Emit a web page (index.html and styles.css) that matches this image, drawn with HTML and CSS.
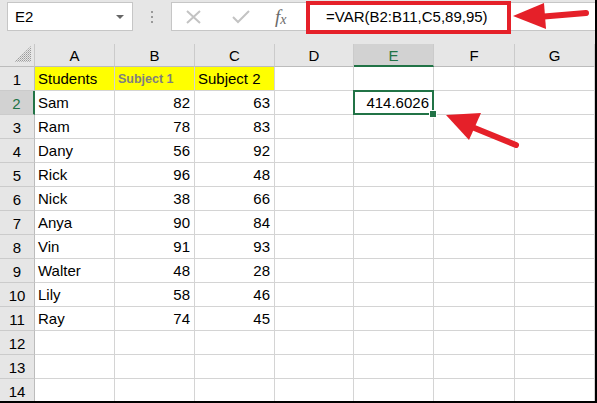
FILE: index.html
```html
<!DOCTYPE html>
<html lang="en">
<head>
    <meta charset="UTF-8">
    <title>VAR - Excel</title>
    <link rel="stylesheet" href="styles.css">
</head>
<body>
    <div class="window">
        <div class="toolbar">
            <div class="namebox">
                <span>E2</span>
                <span class="drop"></span>
            </div>
            <div class="grip"><i></i><i></i><i></i></div>
            <div class="formulabar">
                <div class="fbtns">
                    <svg class="ico" width="18" height="16" viewBox="0 0 18 16"><path d="M2 2 L15 14 M15 2 L2 14" stroke="#c3c3c3" stroke-width="2" fill="none"/></svg>
                    <svg class="ico" width="20" height="16" viewBox="0 0 20 16"><path d="M2 8 L7 13 L18 2" stroke="#c3c3c3" stroke-width="2" fill="none"/></svg>
                    <span class="fx">f<sub>x</sub></span>
                </div>
                <div class="formula">=VAR(B2:B11,C5,89,95)</div>
            </div>
        </div>

        <div class="sheet">
            <div class="hd corner">
                <svg width="18" height="17" viewBox="0 0 18 17">
                    <defs>
                        <pattern id="dots" width="2" height="2" patternUnits="userSpaceOnUse">
                            <rect width="1" height="1" fill="#9a9a9a"/>
                            <rect x="1" y="1" width="1" height="1" fill="#b8b8b8"/>
                        </pattern>
                    </defs>
                    <polygon points="17,0 17,16 0,16" fill="url(#dots)"/>
                </svg>
            </div>
            <div class="hd col">A</div>
            <div class="hd col">B</div>
            <div class="hd col">C</div>
            <div class="hd col">D</div>
            <div class="hd col sel">E</div>
            <div class="hd col">F</div>
            <div class="hd col">G</div>

            <div class="hd row">1</div>
            <div class="c yel">Students</div>
            <div class="c yel sub">Subject 1</div>
            <div class="c yel">Subject 2</div>
            <div class="c"></div><div class="c"></div><div class="c"></div><div class="c"></div>

            <div class="hd row sel">2</div>
            <div class="c">Sam</div><div class="c n">82</div><div class="c n">63</div>
            <div class="c"></div><div class="c n active">414.6026</div><div class="c"></div><div class="c"></div>

            <div class="hd row">3</div>
            <div class="c">Ram</div><div class="c n">78</div><div class="c n">83</div>
            <div class="c"></div><div class="c"></div><div class="c"></div><div class="c"></div>

            <div class="hd row">4</div>
            <div class="c">Dany</div><div class="c n">56</div><div class="c n">92</div>
            <div class="c"></div><div class="c"></div><div class="c"></div><div class="c"></div>

            <div class="hd row">5</div>
            <div class="c">Rick</div><div class="c n">96</div><div class="c n">48</div>
            <div class="c"></div><div class="c"></div><div class="c"></div><div class="c"></div>

            <div class="hd row">6</div>
            <div class="c">Nick</div><div class="c n">38</div><div class="c n">66</div>
            <div class="c"></div><div class="c"></div><div class="c"></div><div class="c"></div>

            <div class="hd row">7</div>
            <div class="c">Anya</div><div class="c n">90</div><div class="c n">84</div>
            <div class="c"></div><div class="c"></div><div class="c"></div><div class="c"></div>

            <div class="hd row">8</div>
            <div class="c">Vin</div><div class="c n">91</div><div class="c n">93</div>
            <div class="c"></div><div class="c"></div><div class="c"></div><div class="c"></div>

            <div class="hd row">9</div>
            <div class="c">Walter</div><div class="c n">48</div><div class="c n">28</div>
            <div class="c"></div><div class="c"></div><div class="c"></div><div class="c"></div>

            <div class="hd row">10</div>
            <div class="c">Lily</div><div class="c n">58</div><div class="c n">46</div>
            <div class="c"></div><div class="c"></div><div class="c"></div><div class="c"></div>

            <div class="hd row">11</div>
            <div class="c">Ray</div><div class="c n">74</div><div class="c n">45</div>
            <div class="c"></div><div class="c"></div><div class="c"></div><div class="c"></div>

            <div class="hd row">12</div>
            <div class="c"></div><div class="c"></div><div class="c"></div>
            <div class="c"></div><div class="c"></div><div class="c"></div><div class="c"></div>

            <div class="hd row">13</div>
            <div class="c"></div><div class="c"></div><div class="c"></div>
            <div class="c"></div><div class="c"></div><div class="c"></div><div class="c"></div>

            <div class="hd row">14</div>
            <div class="c"></div><div class="c"></div><div class="c"></div>
            <div class="c"></div><div class="c"></div><div class="c"></div><div class="c"></div>
        </div>

        <!-- anotações em vermelho -->
        <div class="redbox"></div>
        <svg class="arrows" width="597" height="403" viewBox="0 0 597 403">
            <line x1="538" y1="17" x2="586" y2="13" stroke="#e52029" stroke-width="6" stroke-linecap="round"/>
            <polygon points="513,16 544,3 546,29" fill="#e52029"/>
            <line x1="472" y1="127" x2="516" y2="145" stroke="#e52029" stroke-width="6" stroke-linecap="round"/>
            <polygon points="446,115 481,113 469,140" fill="#e52029"/>
        </svg>
    </div>
</body>
</html>
```

FILE: styles.css
```css
* {
    margin: 0;
    padding: 0;
    box-sizing: border-box;
}
body {
    background: #fff;
    font-family: "Liberation Sans", Arial, sans-serif;
    font-size: 15px;
    color: #000;
}
.window {
    position: relative;
    width: 597px;
    height: 403px;
    overflow: hidden;
    background: #e6e6e6;
    border-right: 2px solid #000;
    border-bottom: 2px solid #000;
}
.toolbar {
    height: 44px;
    display: flex;
    align-items: flex-start;
    padding-top: 2px;
}
.namebox {
    margin-left: 7px;
    width: 126px;
    height: 29px;
    background: #fff;
    border: 1px solid #c6c6c6;
    display: flex;
    align-items: center;
    justify-content: space-between;
    padding: 0 8px 0 7px;
    font-size: 15px;
}
.drop {
    width: 0;
    height: 0;
    border-left: 4px solid transparent;
    border-right: 4px solid transparent;
    border-top: 4px solid #666;
}
.grip {
    width: 38px;
    height: 29px;
    display: flex;
    flex-direction: column;
    align-items: center;
    justify-content: center;
    gap: 3px;
}
.grip i {
    width: 2px;
    height: 2px;
    background: #999;
}
.formulabar {
    flex: 1;
    height: 29px;
    background: #fff;
    border: 1px solid #c6c6c6;
    border-right: none;
    display: flex;
    align-items: center;
}
.fbtns {
    width: 128px;
    display: flex;
    align-items: center;
    padding-left: 13px;
    gap: 28px;
}
.ico {
    display: block;
}
.fx {
    font-family: "Liberation Serif", serif;
    font-style: italic;
    font-size: 19px;
    color: #6a6a6a;
    margin-left: -4px;
}
.fx sub {
    font-size: 14px;
    vertical-align: -1px;
}
.formula {
    padding-left: 26px;
    font-size: 15px;
}
.sheet {
    display: grid;
    grid-template-columns: 35px 80px 80px 80px 79px 80px 81px 80px;
    grid-template-rows: 23px repeat(14, 24px);
    background: #fff;
}
.hd {
    background: #e6e6e6;
    display: flex;
    align-items: center;
    justify-content: center;
    font-size: 15px;
}
.corner {
    border-right: 1px solid #c8c8c8;
    border-bottom: 1px solid #bcbcbc;
    align-items: flex-end;
    justify-content: flex-end;
    padding: 0 2px 3px 0;
}
.corner svg {
    display: block;
}
.col {
    border-right: 1px solid #cbcbcb;
    border-bottom: 1px solid #bcbcbc;
    padding-top: 1px;
}
.row {
    border-right: 1px solid #bcbcbc;
    border-bottom: 1px solid #cbcbcb;
    padding-top: 1px;
}
.hd.sel {
    background: #d2d2d2;
    color: #217346;
}
.col.sel {
    border-bottom: 2px solid #217346;
}
.row.sel {
    border-right: 2px solid #217346;
}
.c {
    border-right: 1px solid #d4d4d4;
    border-bottom: 1px solid #d4d4d4;
    padding: 1px 3px 0 3px;
    line-height: 22px;
    white-space: nowrap;
    overflow: visible;
}
.n {
    text-align: right;
    padding-right: 4px;
}
.yel {
    background: #ffff00;
}
.sub {
    font-size: 12.5px;
    font-weight: bold;
    color: #7f7f7f;
}
.active {
    position: relative;
}
.active::before {
    content: "";
    position: absolute;
    left: -1px;
    top: -1px;
    right: -1px;
    bottom: -1px;
    border: 2px solid #217346;
}
.active::after {
    content: "";
    position: absolute;
    right: -4px;
    bottom: -4px;
    width: 6px;
    height: 6px;
    background: #217346;
    border: 1px solid #fff;
}
.redbox {
    position: absolute;
    left: 306px;
    top: 1px;
    width: 205px;
    height: 33px;
    border: 4px solid #e52029;
}
.arrows {
    position: absolute;
    left: 0;
    top: 0;
    pointer-events: none;
}
```
